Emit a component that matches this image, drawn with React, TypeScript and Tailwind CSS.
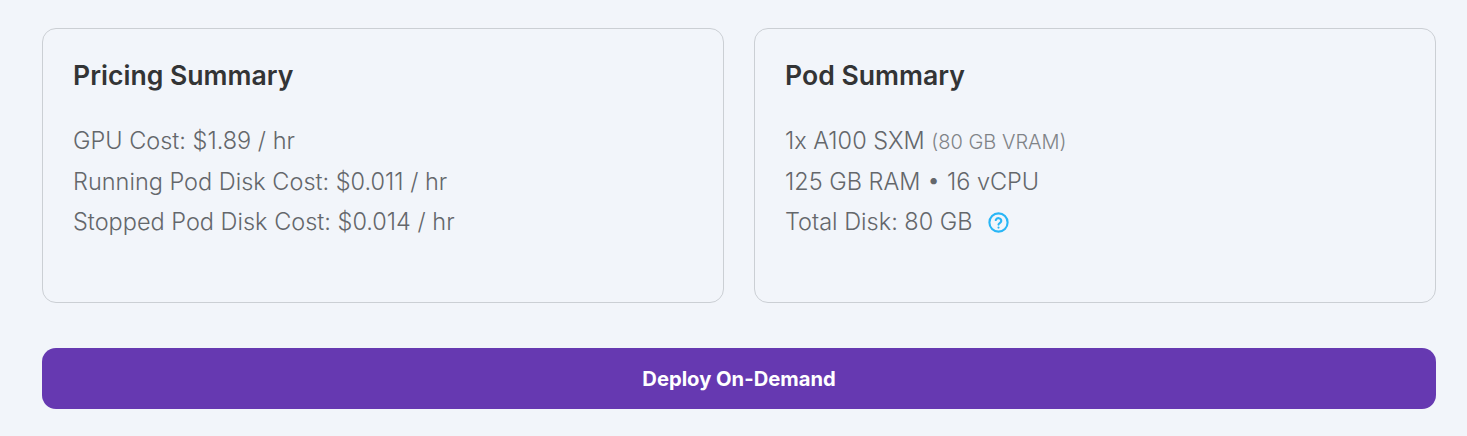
const cardClass = "h-[275px] rounded-[14px] border border-[#cbcfd4] px-[30px] pt-[27px]";
const rowClass = "text-[23.5px] font-light leading-[40.5px] text-[#64676b]";
const titleClass = "mb-[27px] text-[26.6px] font-semibold leading-[38px] text-[#333435]";

function HelpIcon() {
  return (
    <svg width="23" height="23" viewBox="0 0 24 24" fill="none" stroke="#29b6f6" strokeWidth="2.2" strokeLinecap="round" strokeLinejoin="round">
      <circle cx="12" cy="12" r="9.5" />
      <path d="M9.1 9.4a3 3 0 0 1 5.8 1c0 2-2.9 2.3-2.9 3.8" />
      <path d="M12 17.3h.01" />
    </svg>
  );
}

export default function App() {
  return (
    <div className="h-[436px] bg-[#f2f5fa] pl-[42px] pr-[31px] pt-[28px] pb-[27px] font-['Inter',sans-serif]">
      <div className="grid grid-cols-2 gap-[30px]">
        <div className={cardClass}>
          <h2 className={titleClass}>Pricing Summary</h2>
          <div className={rowClass}>GPU Cost: $1.89 / hr</div>
          <div className={rowClass}>Running Pod Disk Cost: $0.011 / hr</div>
          <div className={rowClass}>Stopped Pod Disk Cost: $0.014 / hr</div>
        </div>
        <div className={cardClass}>
          <h2 className={titleClass}>Pod Summary</h2>
          <div className={rowClass}>
            1x A100 SXM <span className="text-[20px] leading-none text-[#808387]">(80 GB VRAM)</span>
          </div>
          <div className={rowClass}>125 GB RAM • 16 vCPU</div>
          <div className={`${rowClass} flex items-center gap-[14px]`}>
            Total Disk: 80 GB
            <HelpIcon />
          </div>
        </div>
      </div>
      <button className="mt-[45px] flex h-[61px] w-full items-center justify-center rounded-[14px] bg-[#6639b1] pt-[1px] text-[20.2px] font-bold text-white">
        Deploy On-Demand
      </button>
    </div>
  );
}
